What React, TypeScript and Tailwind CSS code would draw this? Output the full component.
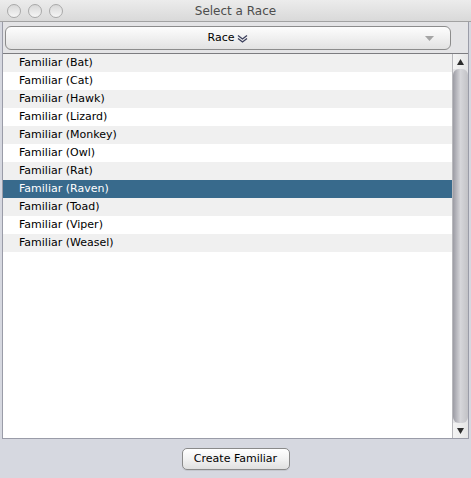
import React from 'react';

const races = ['Bat', 'Cat', 'Hawk', 'Lizard', 'Monkey', 'Owl', 'Rat', 'Raven', 'Toad', 'Viper', 'Weasel'];
const selected = 'Raven';

const TrafficLight = () => (
  <div className="w-[14px] h-[14px] rounded-full border border-[#a9a9a9] bg-gradient-to-b from-[#d8d8d8] to-[#f6f6f6]" />
);

export default function App() {
  return (
    <div className="w-[471px] h-[478px] bg-[#d6d8e0] flex flex-col font-['DejaVu_Sans',sans-serif] text-black overflow-hidden">
      {/* title bar */}
      <div className="relative h-[22px] flex items-center bg-gradient-to-b from-[#ececec] to-[#d9d9d9] border-b border-[#a2a2a2]">
        <div className="flex items-center gap-[7px] pl-[7px]">
          <TrafficLight />
          <TrafficLight />
          <TrafficLight />
        </div>
        <div className="absolute inset-0 flex items-center justify-center text-[12px] text-[#4d4d4d]">Select a Race</div>
      </div>

      {/* table box */}
      <div className="mx-[2px] h-[417px] flex flex-col border-x border-b border-[#9a9ca8] bg-[#e4e4e6]">
        <div className="h-[31px] flex pt-[4px] pl-[2px]">
          <div className="w-[446px] h-[24px] rounded-[6px] border border-[#8c8c8c] bg-gradient-to-b from-[#fdfdfd] via-[#f0f0f0] to-[#e2e2e2] flex items-center relative">
            <div className="flex-1 flex items-center justify-center gap-[3px] text-[11px]">
              <span>Race</span>
              <svg width="11" height="10" viewBox="0 0 11 10" className="mt-[1px]">
                <polyline points="1,1.5 5.5,5 10,1.5" fill="none" stroke="#3b3f5c" strokeWidth="1.3" />
                <polyline points="1,4.5 5.5,8 10,4.5" fill="none" stroke="#3b3f5c" strokeWidth="1.3" />
              </svg>
            </div>
            <svg width="9" height="5" viewBox="0 0 9 5" className="absolute right-[16px] top-[9px]">
              <polygon points="0,0 9,0 4.5,5" fill="#a4a4a4" />
            </svg>
          </div>
        </div>

        <div className="flex-1 flex border-t border-[#7c7c80] min-h-0">
          <div className="flex-1 bg-white">
            {races.map((r, i) => {
              const isSel = r === selected;
              return (
                <div
                  key={r}
                  className={`h-[18px] flex items-center pl-[16px] text-[11px] ${
                    isSel ? 'bg-[#386a8c] text-white' : i % 2 === 0 ? 'bg-[#f0f0f0]' : 'bg-white'
                  }`}
                >
                  Familiar ({r})
                </div>
              );
            })}
          </div>

          {/* scrollbar */}
          <div className="w-[16px] flex flex-col border-l border-[#b8b8bc]">
            <div className="h-[15px] bg-gradient-to-r from-[#f4f4f4] to-[#e6e6e6] flex items-center justify-center">
              <svg width="7" height="6" viewBox="0 0 7 6">
                <polygon points="3.5,0 7,6 0,6" fill="#2c2c2c" />
              </svg>
            </div>
            <div className="flex-1 rounded-t-[6px] rounded-b-[6px] bg-gradient-to-r from-[#9c9ca4] via-[#d6d6da] to-[#c2c2c6]" />
            <div className="h-[15px] bg-gradient-to-r from-[#f4f4f4] to-[#e6e6e6] flex items-center justify-center">
              <svg width="7" height="6" viewBox="0 0 7 6">
                <polygon points="0,0 7,0 3.5,6" fill="#2c2c2c" />
              </svg>
            </div>
          </div>
        </div>
      </div>

      {/* footer */}
      <div className="flex-1 flex items-start justify-center pt-[9px]">
        <button className="w-[108px] h-[22px] rounded-[5px] border border-[#8a8a8a] bg-gradient-to-b from-[#ffffff] via-[#f2f2f2] to-[#e0e0e0] text-[11px] shadow-[0_1px_0_rgba(0,0,0,0.08)]">
          Create Familiar
        </button>
      </div>
    </div>
  );
}
